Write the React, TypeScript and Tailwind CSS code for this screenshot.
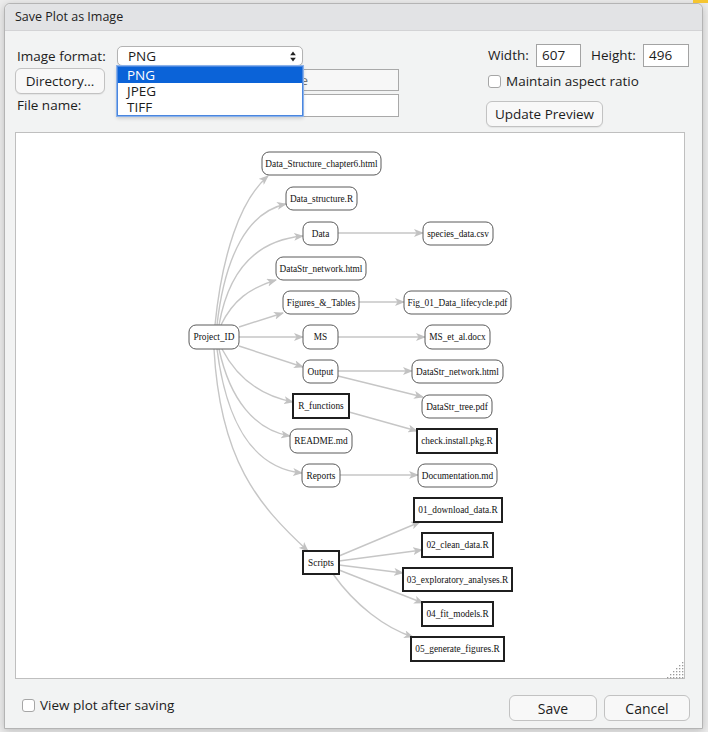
import React from "react";

type Node = { label: string; x1: number; y1: number; x2: number; y2: number; square?: boolean };

const nodes: Node[] = [
  { label: "Data_Structure_chapter6.html", x1: 262, y1: 152, x2: 381, y2: 175 },
  { label: "Data_structure.R", x1: 286, y1: 187, x2: 357, y2: 210 },
  { label: "Data", x1: 303, y1: 222, x2: 338, y2: 245 },
  { label: "DataStr_network.html", x1: 276, y1: 257, x2: 366, y2: 280 },
  { label: "Figures_&_Tables", x1: 283, y1: 291, x2: 359, y2: 314 },
  { label: "Project_ID", x1: 189, y1: 325, x2: 239, y2: 349 },
  { label: "MS", x1: 303, y1: 325, x2: 338, y2: 349 },
  { label: "Output", x1: 303, y1: 360, x2: 338, y2: 383 },
  { label: "R_functions", x1: 293, y1: 394, x2: 349, y2: 418, square: true },
  { label: "README.md", x1: 290, y1: 429, x2: 352, y2: 453 },
  { label: "Reports", x1: 302, y1: 464, x2: 340, y2: 487 },
  { label: "Scripts", x1: 303, y1: 551, x2: 339, y2: 574, square: true },
  { label: "species_data.csv", x1: 423, y1: 222, x2: 493, y2: 245 },
  { label: "Fig_01_Data_lifecycle.pdf", x1: 404, y1: 291, x2: 511, y2: 314 },
  { label: "MS_et_al.docx", x1: 425, y1: 325, x2: 490, y2: 349 },
  { label: "DataStr_network.html", x1: 412, y1: 360, x2: 503, y2: 383 },
  { label: "DataStr_tree.pdf", x1: 422, y1: 395, x2: 492, y2: 418 },
  { label: "check.install.pkg.R", x1: 417, y1: 429, x2: 497, y2: 453, square: true },
  { label: "Documentation.md", x1: 418, y1: 464, x2: 497, y2: 487 },
  { label: "01_download_data.R", x1: 414, y1: 498, x2: 502, y2: 522, square: true },
  { label: "02_clean_data.R", x1: 422, y1: 533, x2: 493, y2: 557, square: true },
  { label: "03_exploratory_analyses.R", x1: 403, y1: 568, x2: 512, y2: 591, square: true },
  { label: "04_fit_models.R", x1: 422, y1: 602, x2: 493, y2: 626, square: true },
  { label: "05_generate_figures.R", x1: 411, y1: 637, x2: 504, y2: 661, square: true },
];

const edges: string[] = [
  "M215,325 C222,255 240,200 268,176",
  "M217,325 C225,255 248,212 286,204",
  "M219,325 C229,268 258,240 303,236",
  "M221,325 C233,300 250,288 276,280",
  "M239,327 L283,313",
  "M239,337 L303,337",
  "M239,346 L303,367",
  "M222,349 C238,380 262,396 293,402",
  "M219,349 C230,400 255,430 290,436",
  "M217,349 C226,420 252,468 302,473",
  "M214,349 C220,460 258,505 308,551",
  "M338,233 L423,233",
  "M359,302 L404,302",
  "M338,337 L425,337",
  "M338,371 L412,371",
  "M338,376 L423,397",
  "M349,412 L417,431",
  "M340,475 L418,475",
  "M339,556 L420,522",
  "M339,561 L422,550",
  "M339,565 L403,573",
  "M339,570 L423,603",
  "M333,574 C355,605 385,628 413,637",
];

function Graph() {
  return (
    <svg width="668" height="545" viewBox="16 133 668 545" className="block">
      <defs>
        <marker
          id="arr"
          viewBox="0 0 10 8"
          refX="9"
          refY="4"
          markerWidth="10"
          markerHeight="8"
          markerUnits="userSpaceOnUse"
          orient="auto"
        >
          <path d="M0,0 L10,4 L0,8 L2.5,4 z" fill="#c2c2c2" />
        </marker>
      </defs>
      {edges.map((d, i) => (
        <path key={i} d={d} fill="none" stroke="#c6c6c6" strokeWidth="1.4" markerEnd="url(#arr)" />
      ))}
      {nodes.map((n, i) => (
        <g key={i}>
          <rect
            x={n.x1}
            y={n.y1}
            width={n.x2 - n.x1}
            height={n.y2 - n.y1}
            rx={n.square ? 0 : 7}
            fill="#fff"
            stroke={n.square ? "#1f1f1f" : "#5a5a5a"}
            strokeWidth={n.square ? 2 : 1}
          />
          <text
            x={(n.x1 + n.x2) / 2}
            y={(n.y1 + n.y2) / 2 + 3.2}
            textAnchor="middle"
            fontSize="9.3"
            fill="#111"
            fontFamily="'Liberation Serif', serif"
          >
            {n.label}
          </text>
        </g>
      ))}
    </svg>
  );
}

function Grip() {
  const dots: React.ReactNode[] = [];
  for (let r = 0; r < 6; r++) {
    for (let c = 5 - r; c < 6; c++) {
      dots.push(<rect key={`${r}-${c}`} x={3 + c * 3} y={3 + r * 3} width="1.3" height="1.3" fill="#9a9a9a" />);
    }
  }
  return (
    <svg width="22" height="22" className="absolute right-[-2px] bottom-[-3px]">
      {dots}
    </svg>
  );
}

function UpDown() {
  return (
    <svg width="6" height="11" viewBox="0 0 6 11">
      <path d="M3,0.5 L5.8,4.2 L0.2,4.2 z" fill="#222" />
      <path d="M3,10.5 L5.8,6.8 L0.2,6.8 z" fill="#222" />
    </svg>
  );
}

export default function App() {
  return (
    <div className="relative h-[732px] w-[708px] overflow-hidden bg-[#ececec] font-['Open_Sans',sans-serif] text-[13.5px] text-[#1c1c1c]">
      <div className="absolute right-0 top-0 h-[3px] w-[15px] bg-[#f5c531]" />
      <div className="pl-[4px] pt-[3px]">
        <div className="flex h-[726px] w-[699px] flex-col rounded-t-[6px] border border-[#b4b4b4] bg-[#f2f3f3] shadow-[0_2px_8px_rgba(0,0,0,0.2)]">
          <div className="flex h-[27px] items-center rounded-t-[6px] border-b border-[#d3d3d5] bg-[#e2e3e5] pl-[10px] text-[12.5px] text-[#222]">
            Save Plot as Image
          </div>

          <div className="flex h-[101px] pl-[10px] pr-[13px] pt-[13px]">
            <div className="w-[384px]">
              <div className="mt-[2px] flex h-[20px] items-center">
                <span className="w-[102px] pl-[2px]">Image format:</span>
                <div className="relative z-10 h-[20px] w-[186px]">
                  <div className="flex h-[20px] items-center justify-between rounded-[5px] border border-[#b3b3b3] bg-white pl-[10px] pr-[6px] shadow-[0_1px_1px_rgba(0,0,0,0.08)]">
                    <span>PNG</span>
                    <UpDown />
                  </div>
                  <div className="absolute left-0 top-[20px] h-[50px] w-[186px] border border-[#4a86df] bg-white shadow-[0_2px_4px_rgba(0,0,0,0.2)] ring-1 ring-[#8bb2ea]">
                    <div className="flex h-[16px] items-center bg-[#0b63d8] pl-[9px] text-white">
                      <span>PNG</span>
                    </div>
                    <div className="flex h-[16px] items-center pl-[9px]">
                      <span>JPEG</span>
                    </div>
                    <div className="flex h-[16px] items-center pl-[9px]">
                      <span>TIFF</span>
                    </div>
                  </div>
                </div>
              </div>
              <div className="mt-[2px] flex h-[26px]">
                <button className="h-[26px] w-[90px] rounded-[6px] border border-[#c2c2c2] bg-[#f8f8f8] text-[13.5px] shadow-[0_1px_1px_rgba(0,0,0,0.06)]">
                  Directory...
                </button>
                <div className="ml-[12px] mt-[1px] h-[22px] w-[282px] border border-[#a9a9a9] bg-[#f7f7f7]">
                  <div className="flex h-full w-[190px] items-center justify-end overflow-hidden whitespace-nowrap text-[#777]">
                    <span>Figure</span>
                  </div>
                </div>
              </div>
              <div className="flex h-[23px] items-center">
                <span className="w-[102px] pl-[2px]">File name:</span>
                <div className="h-[23px] w-[282px] border border-[#a9a9a9] bg-white" />
              </div>
            </div>

            <div className="flex-1" />

            <div className="w-[203px]">
              <div className="flex h-[23px] items-center">
                <span className="w-[50px] pl-[2px]">Width:</span>
                <div className="flex h-[23px] w-[45px] items-center border border-[#a3a3a3] bg-white pl-[5px]">607</div>
                <span className="w-[62px] pl-[10px]">Height:</span>
                <div className="flex h-[23px] w-[46px] items-center border border-[#a3a3a3] bg-white pl-[5px]">496</div>
              </div>
              <div className="mt-[8px] flex h-[13px] items-center">
                <div className="ml-[2px] h-[13px] w-[13px] rounded-[3px] border border-[#a6a6a6] bg-white" />
                <span className="ml-[5px]">Maintain aspect ratio</span>
              </div>
              <button className="mt-[13px] h-[26px] w-[117px] rounded-[6px] border border-[#c2c2c2] bg-[#f8f8f8] text-[13.5px] shadow-[0_1px_1px_rgba(0,0,0,0.06)]">
                Update Preview
              </button>
            </div>
          </div>

          <div className="relative ml-[10px] h-[547px] w-[670px] border border-[#bfbfbf] bg-white">
            <Graph />
            <Grip />
          </div>

          <div className="mt-[16px] flex h-[26px] items-start pl-[17px] pr-[12px]">
            <div className="mt-[3px] flex h-[14px] items-center">
              <div className="h-[13px] w-[13px] rounded-[3px] border border-[#a6a6a6] bg-white" />
              <span className="ml-[5px]">View plot after saving</span>
            </div>
            <div className="flex-1" />
            <button className="h-[26px] w-[88px] rounded-[6px] border border-[#c2c2c2] bg-[#f8f8f8] text-[14px]">
              Save
            </button>
            <button className="ml-[7px] h-[26px] w-[86px] rounded-[6px] border border-[#c2c2c2] bg-[#f8f8f8] text-[14px]">
              Cancel
            </button>
          </div>
        </div>
      </div>
    </div>
  );
}
